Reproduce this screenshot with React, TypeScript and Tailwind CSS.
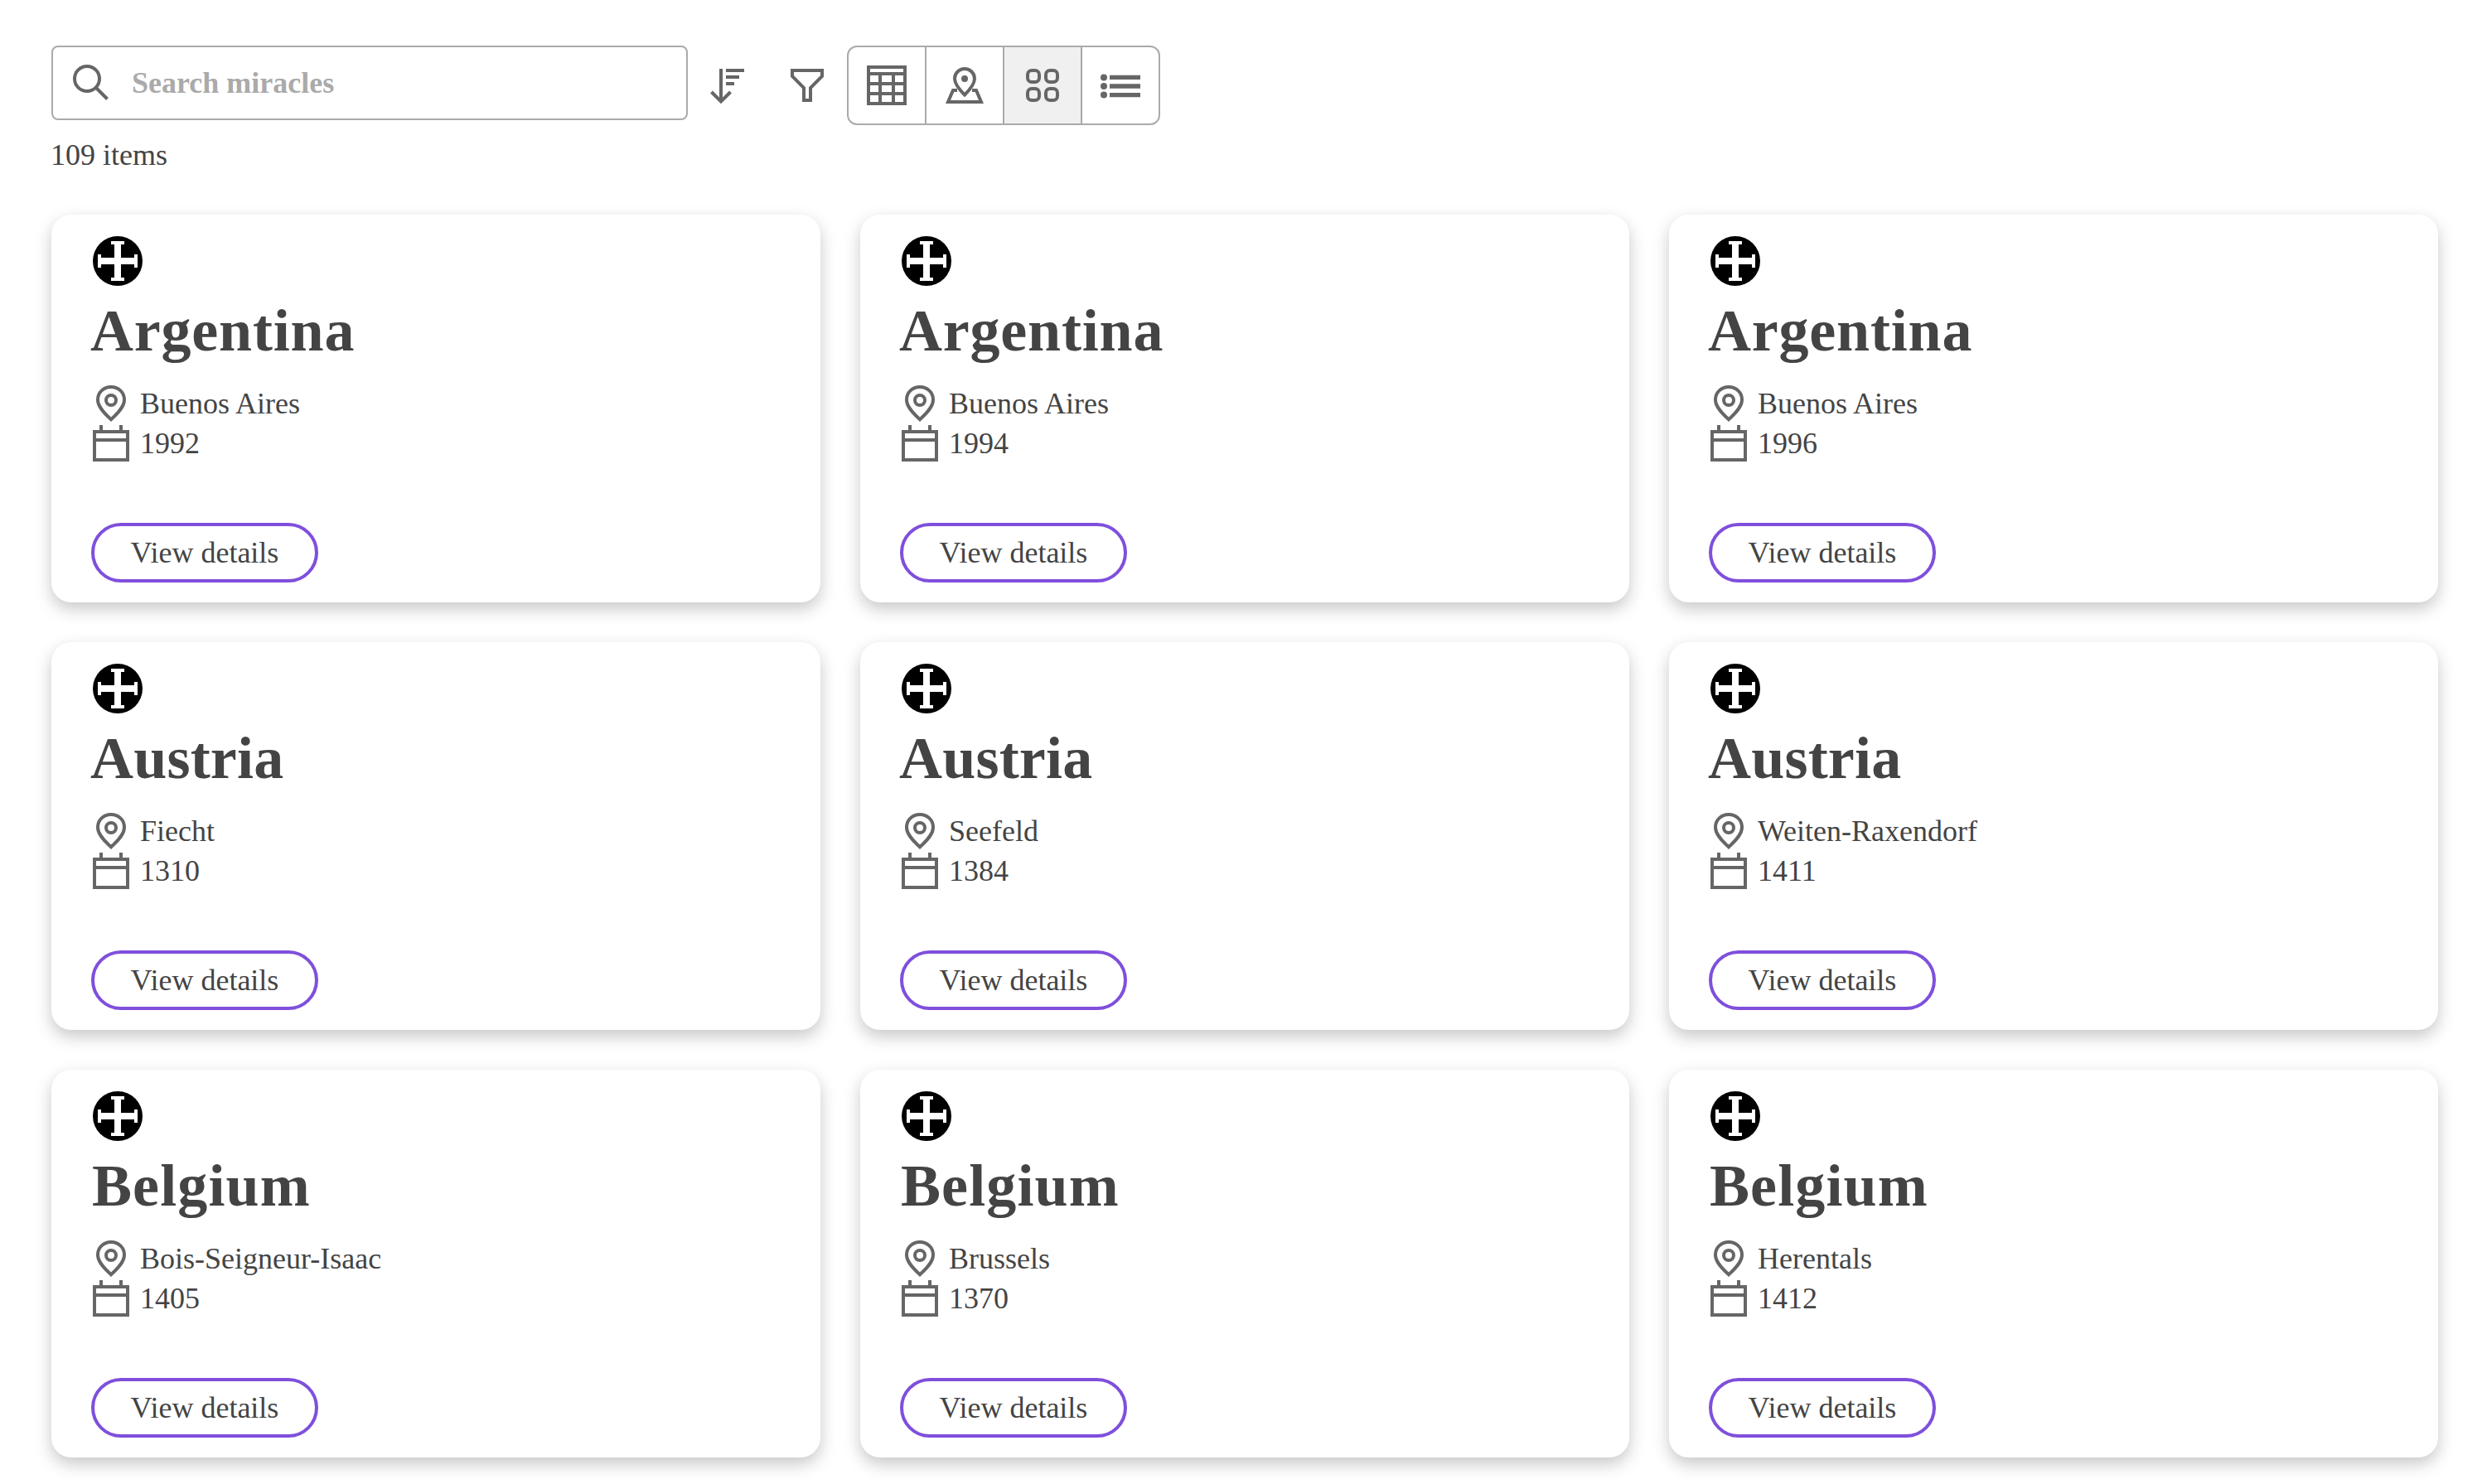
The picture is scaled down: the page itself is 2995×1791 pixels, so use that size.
import React from 'react';

interface Miracle {
  country: string;
  city: string;
  year: string;
}

const miracles: Miracle[] = [
  { country: 'Argentina', city: 'Buenos Aires', year: '1992' },
  { country: 'Argentina', city: 'Buenos Aires', year: '1994' },
  { country: 'Argentina', city: 'Buenos Aires', year: '1996' },
  { country: 'Austria', city: 'Fiecht', year: '1310' },
  { country: 'Austria', city: 'Seefeld', year: '1384' },
  { country: 'Austria', city: 'Weiten-Raxendorf', year: '1411' },
  { country: 'Belgium', city: 'Bois-Seigneur-Isaac', year: '1405' },
  { country: 'Belgium', city: 'Brussels', year: '1370' },
  { country: 'Belgium', city: 'Herentals', year: '1412' },
];

// Tracking and optical left margin for each country heading
const headingStyles: Record<string, string> = {
  Argentina: '-ml-px tracking-[0.8px]',
  Austria: '-ml-px tracking-[0.2px]',
  Belgium: 'ml-px tracking-[1.1px]',
};

interface IconProps {
  children: React.ReactNode;
}

// 48px icon, drawn on a 48 unit grid
function Icon({ children }: IconProps) {
  return (
    <svg
      className="size-12 shrink-0 text-[#666]"
      viewBox="0 0 48 48"
      fill="none"
      stroke="currentColor"
      strokeWidth="4"
    >
      {children}
    </svg>
  );
}

function SearchIcon() {
  return (
    <Icon>
      <circle cx="19" cy="19" r="15" />
      <path d="M29.5 29.5L43.5 43.5" />
    </Icon>
  );
}

function SortIcon() {
  return (
    <Icon>
      <path d="M16 4V43M4.5 32L16 43.5L27.5 32" />
      <path d="M22 6H44M22 14H38M22 22H32" />
    </Icon>
  );
}

function FilterIcon() {
  return (
    <Icon>
      <path d="M6 6H42V13L28 27V42H20V27L6 13Z" />
    </Icon>
  );
}

function TableIcon() {
  return (
    <Icon>
      <path d="M2 2H46V46H2ZM2 10H46M2 22H46M2 34H46M16 10V46M32 10V46" />
    </Icon>
  );
}

function MapIcon() {
  return (
    <Icon>
      <path d="M24 35.5C18 29.5 12 23 12 16a12 12 0 0 1 24 0C36 23 30 29.5 24 35.5Z" />
      <circle cx="24" cy="16" r="4" fill="currentColor" stroke="none" />
      <path d="M15 30H10L4 44H44L38 30H33" />
    </Icon>
  );
}

function GridIcon() {
  return (
    <Icon>
      <rect x="6" y="6" width="14" height="14" rx="5" />
      <rect x="28" y="6" width="14" height="14" rx="5" />
      <rect x="6" y="28" width="14" height="14" rx="5" />
      <rect x="28" y="28" width="14" height="14" rx="5" />
    </Icon>
  );
}

function ListIcon() {
  return (
    <Icon>
      <g fill="currentColor" stroke="none">
        <circle cx="4" cy="14.4" r="4" />
        <circle cx="4" cy="25" r="4" />
        <circle cx="4" cy="35.6" r="4" />
      </g>
      <path d="M11 14.4H48M11 25H48M11 35.6H48" strokeWidth="5.4" />
    </Icon>
  );
}

function PinIcon() {
  return (
    <Icon>
      <path d="M24 43.2C15 35 8 27.5 8 19.5C8 10.5 15 4 24 4S40 10.5 40 19.5C40 27.5 33 35 24 43.2Z" />
      <circle cx="24" cy="20" r="6" />
    </Icon>
  );
}

function CalendarIcon() {
  return (
    <Icon>
      <path d="M4 10H44V44H4ZM4 20H44M12 2V8M36 2V8" />
    </Icon>
  );
}

function CrossIcon() {
  return (
    <svg className="size-16" viewBox="0 0 64 64">
      <circle cx="32" cy="32" r="30" fill="#000" />
      <path
        fill="#fff"
        d="M24 8H40V12H36V28H52V24H56V40H52V36H36V52H40V56H24V52H28V36H12V40H8V24H12V28H28V12H24Z"
      />
    </svg>
  );
}

function MiracleCard({ miracle }: { miracle: Miracle }) {
  return (
    <div className="flex h-[468px] flex-col items-start rounded-3xl bg-white px-12 py-6 shadow-[0_8px_20px_rgba(0,0,0,0.22)]">
      <CrossIcon />
      <h2
        className={`mt-3 mb-6 text-[72px] leading-[80px] font-bold whitespace-nowrap ${headingStyles[miracle.country]}`}
      >
        {miracle.country}
      </h2>
      <div className="flex items-center gap-[11px]">
        <PinIcon />
        <span>{miracle.city}</span>
      </div>
      <div className="flex items-center gap-[11px]">
        <CalendarIcon />
        <span>{miracle.year}</span>
      </div>
      <button className="mt-auto flex h-[72px] w-[274px] items-center justify-center rounded-full border-4 border-[#7f4fdc]">
        View details
      </button>
    </div>
  );
}

const views = [
  { name: 'table', icon: <TableIcon /> },
  { name: 'map', icon: <MapIcon /> },
  { name: 'grid', icon: <GridIcon /> },
  { name: 'list', icon: <ListIcon /> },
];

export default function App() {
  const activeView = 'grid';

  return (
    <div className="h-[1791px] overflow-hidden bg-white pt-[55px] pl-[62px] font-['Liberation_Serif',serif] text-[36px] leading-[48px] text-[#444]">
      <div className="flex h-24 items-start">
        <div className="flex h-[90px] w-[768px] items-center rounded-lg border-2 border-[#aaa] pl-[22px]">
          <SearchIcon />
          <input
            type="text"
            placeholder="Search miracles"
            className="ml-[25px] w-[600px] font-bold outline-none placeholder:text-[#aaa]"
          />
        </div>
        <div className="flex h-24 w-24 items-center justify-center">
          <SortIcon />
        </div>
        <div className="flex h-24 w-24 items-center justify-center">
          <FilterIcon />
        </div>
        <div className="flex h-24 w-[378px] divide-x-2 divide-[#aaa] overflow-hidden rounded-xl border-2 border-[#aaa]">
          {views.map((view) => (
            <button
              key={view.name}
              className={`flex flex-1 items-center justify-center ${view.name === activeView ? 'bg-[#f0f0f0]' : ''}`}
            >
              {view.icon}
            </button>
          ))}
        </div>
      </div>

      <p className="mt-3 mb-12 -ml-px">109 items</p>

      <div className="grid w-[2880px] grid-cols-3 gap-12">
        {miracles.map((miracle) => (
          <MiracleCard key={`${miracle.country}-${miracle.year}`} miracle={miracle} />
        ))}
      </div>
    </div>
  );
}
